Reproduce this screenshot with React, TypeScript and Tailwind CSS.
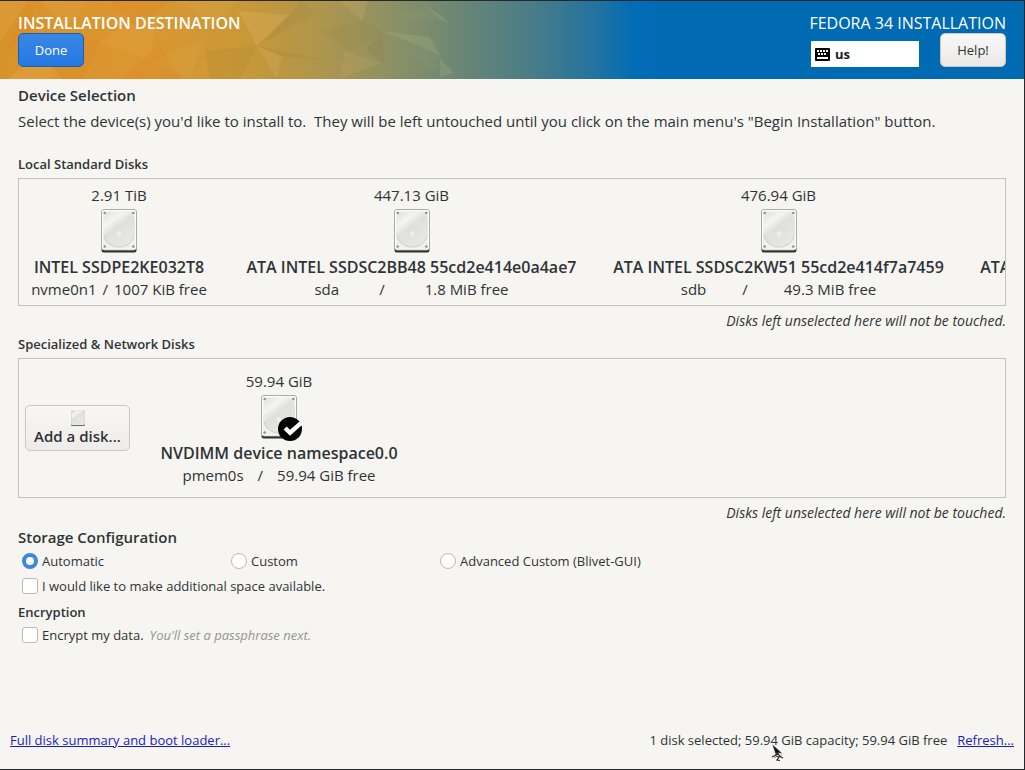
import React, { useId, useState } from "react";

type Disk = {
  size: string;
  name: string;
  device: string;
  free: string;
  width: string;
  gap: string;
};

const LOCAL_DISKS: Disk[] = [
  { size: "2.91 TiB", name: "INTEL SSDPE2KE032T8", device: "nvme0n1", free: "1007 KiB free", width: "w-44", gap: "gap-1.5" },
  { size: "447.13 GiB", name: "ATA INTEL SSDSC2BB48 55cd2e414e0a4ae7", device: "sda", free: "1.8 MiB free", width: "w-[325px]", gap: "gap-10" },
  { size: "476.94 GiB", name: "ATA INTEL SSDSC2KW51 55cd2e414f7a7459", device: "sdb", free: "49.3 MiB free", width: "w-[325px]", gap: "gap-9" },
  { size: "476.94 GiB", name: "ATA INTEL SSDSC2KW51 55cd2e414f7a7460", device: "sdc", free: "49.3 MiB free", width: "w-[325px]", gap: "gap-9" },
];

const NETWORK_DISK: Disk = {
  size: "59.94 GiB",
  name: "NVDIMM device namespace0.0",
  device: "pmem0s",
  free: "59.94 GiB free",
  width: "w-[226px]",
  gap: "gap-3.5",
};

function DiskIcon({ className }: { className: string }) {
  const id = useId();
  return (
    <svg viewBox="0 0 36 44" className={className} aria-hidden="true" preserveAspectRatio="none">
      <defs>
        <linearGradient id={`${id}p`} x1="0" y1="0" x2="0.7" y2="1">
          <stop offset="0" stopColor="#dededb" />
          <stop offset="0.3" stopColor="#f4f4f2" />
          <stop offset="0.5" stopColor="#dfdfdb" />
          <stop offset="1" stopColor="#e8e8e5" />
        </linearGradient>
      </defs>
      <rect x="0.5" y="4" width="35" height="39.5" rx="2.5" fill="#2c3032" />
      <rect x="0.5" y="0.5" width="35" height="40.5" rx="2.5" fill="#f0f0ee" stroke="#a9aba8" />
      <rect x="1.5" y="1.5" width="33" height="38.5" rx="1.5" fill="none" stroke="#fcfcfc" />
      <path d="M5.500 3h25l3.500 8v14c-1 8-8 13-16 13S3 33 2 25V11z" fill={`url(#${id}p)`} />
      <path d="M3 27c2 7 8 11 15 11s13-4 15-11" fill="none" stroke="#c6c6c2" strokeWidth="0.8" />
      <circle cx="18" cy="24.500" r="1.800" fill="#ececea" stroke="#f8f8f6" strokeWidth="0.6" />
      <g fill="#8b8d8a">
        <circle cx="3.700" cy="4" r="1.200" />
        <circle cx="32.300" cy="4" r="1.200" />
        <circle cx="3.700" cy="37.500" r="1.200" />
        <circle cx="32.300" cy="37.500" r="1.200" />
      </g>
    </svg>
  );
}

function CheckBadge() {
  return (
    <svg viewBox="0 0 24 24" className="absolute left-[17px] top-[22px] h-6 w-6" aria-hidden="true">
      <circle cx="12" cy="12" r="12" fill="#000" />
      <path d="M5.500 12.500 8.800 9.500l3.200 3.300L21.500 4.500 24.500 7.500 12 18.800z" fill="#fff" />
    </svg>
  );
}

function DiskTile({ disk, selected = false }: { disk: Disk; selected?: boolean }) {
  return (
    <button
      type="button"
      aria-pressed={selected}
      className={`flex shrink-0 flex-col items-center whitespace-nowrap text-[15px] leading-[22px] ${disk.width}`}
    >
      <span>{disk.size}</span>
      <span className="relative my-[3px] h-11 w-9">
        <DiskIcon className="h-11 w-9" />
        {selected && <CheckBadge />}
      </span>
      <span className="text-base leading-[22px] font-semibold">{disk.name}</span>
      <span className={`flex ${disk.gap}`}>
        <span>{disk.device}</span>
        <span>/</span>
        <span>{disk.free}</span>
      </span>
    </button>
  );
}

function Backdrop() {
  return (
    <svg
      className="absolute inset-y-0 left-0 h-full w-[660px]"
      viewBox="0 0 660 78"
      preserveAspectRatio="none"
      aria-hidden="true"
    >
      <defs>
        <linearGradient id="sky" x1="0" x2="1" y1="0" y2="0">
          <stop offset="0" stopColor="#d8922c" />
          <stop offset="0.2" stopColor="#dc9630" />
          <stop offset="0.36" stopColor="#cb9836" />
          <stop offset="0.5" stopColor="#ab9550" />
          <stop offset="0.6" stopColor="#8a9066" />
          <stop offset="0.7" stopColor="#698675" />
          <stop offset="0.8" stopColor="#4b7d86" />
          <stop offset="0.9" stopColor="#24739f" />
          <stop offset="0.96" stopColor="#026cb7" />
          <stop offset="1" stopColor="#006bb3" />
        </linearGradient>
      </defs>
      <rect width="660" height="78" fill="url(#sky)" />
      <g fill="#f5c978">
        <path d="M238 10 289 14 257 45z" opacity=".2" />
        <path d="M257 45 282 55 277 78z" opacity=".14" />
        <path d="M40 0 90 0 66 26z" opacity=".1" />
        <path d="M8 78 40 48 62 78z" opacity=".14" />
        <path d="M100 40 160 8 150 60z" opacity=".08" />
        <path d="M150 62 205 36 190 78z" opacity=".08" />
        <path d="M0 0 28 0 0 40z" opacity=".12" />
        <path d="M340 0 368 0 362 20z" opacity=".14" />
        <path d="M394 14 450 22 432 8z" opacity=".06" />
        <path d="M180 0 236 0 212 24z" opacity=".1" />
        <path d="M340 78 345 50 382 62z" opacity=".1" />
      </g>
      <g fill="#8c7a3c">
        <path d="M257 45 316 12 300 0 289 14z" opacity=".14" />
        <path d="M257 45 330 60 282 55z" opacity=".14" />
        <path d="M320 30 362 20 384 30 350 50z" opacity=".1" />
        <path d="M205 50 257 45 240 78 210 78z" opacity=".12" />
        <path d="M366 48 385 64 382 30z" opacity=".2" />
      </g>
      <g fill="#e07a10">
        <path d="M60 30 100 40 84 78 50 78z" opacity=".12" />
        <path d="M110 0 170 0 140 30z" opacity=".18" />
        <path d="M28 0 40 30 6 50z" opacity=".16" />
        <path d="M160 44 182 78 120 78z" opacity=".14" />
      </g>
      <g fill="#a9b78b">
        <path d="M382 30 430 36 440 54z" opacity=".26" />
        <path d="M440 58 454 72 440 76z" opacity=".24" />
        <path d="M405 44 440 54 434 72z" opacity=".08" />
        <path d="M420 0 450 22 440 18z" opacity=".22" />
      </g>
    </svg>
  );
}

function KeyboardIcon() {
  return (
    <svg viewBox="0 0 15 13" className="h-[13px] w-[15px]" aria-hidden="true">
      <rect width="15" height="13" rx="1" fill="#000" />
      <g fill="#fff">
        <path d="M2 2h2v2H2zM5 2h2v2H5zM8 2h2v2H8zM11 2h2v2h-2zM3 5h2v2H3zM6 5h2v2H6zM9 5h2v2H9zM2 9h11v2H2z" />
      </g>
    </svg>
  );
}

function Pointer() {
  return (
    <svg viewBox="0 0 14 18" className="pointer-events-none absolute right-[229px] top-3.5 h-[18px] w-3.5" aria-hidden="true">
      <path d="M1 0 11.500 9.500 7 9 4.500 10z" fill="#111" stroke="#fff" strokeWidth="0.4" />
      <path d="M7 9 4 11.500 1 13M7 9.500l2 3 3 1.500M5 12l3 1-2 3 3 .5" fill="none" stroke="#222" strokeWidth="1.200" />
      <path d="M2 12.500 5 13.500M8 12l2.500-1" fill="none" stroke="#666" strokeWidth="0.8" />
    </svg>
  );
}

const control = "m-0 size-4 shrink-0 appearance-none border border-[#bdbbb7] bg-white";

function Radio({ label, value, checked, onPick }: { label: string; value: string; checked: boolean; onPick: (v: string) => void }) {
  return (
    <label className="flex items-center gap-1">
      <input
        type="radio"
        name="storage"
        value={value}
        checked={checked}
        onChange={() => onPick(value)}
        className={`${control} rounded-full checked:border-4 checked:border-[#3f86dd]`}
      />
      {label}
    </label>
  );
}

export default function App() {
  const [mode, setMode] = useState("automatic");
  return (
    <div className="flex min-h-screen flex-col border-t border-r border-b border-[#26292b] bg-[#f6f5f2] font-['Open_Sans','Noto_Sans',sans-serif] text-[13px] leading-5 text-[#2e3436]">
      <header className="relative flex items-start justify-between bg-[#006bb3] px-[18px] py-3 text-white">
        <Backdrop />
        <div className="relative">
          <h1 className="text-base leading-5 font-semibold">INSTALLATION DESTINATION</h1>
          <button
            type="button"
            className="h-[34px] w-[66px] rounded-[5px] border border-[#1b5fb4] bg-linear-to-b from-[#3987e5] to-[#2379e2]"
          >
            Done
          </button>
        </div>
        <div className="relative">
          <p className="text-base leading-5">FEDORA 34 INSTALLATION</p>
          <div className="flex items-end justify-end gap-[21px]">
            <button type="button" className="flex h-[26px] w-[108px] items-center gap-[5px] bg-white px-1 font-bold text-[#1a1c1d]">
              <KeyboardIcon />
              us
            </button>
            <button
              type="button"
              className="h-[34px] w-[66px] rounded-[5px] border border-[#cdc7c2] bg-linear-to-b from-[#f9f8f7] to-[#ebe9e7] text-[#2e3436]"
            >
              Help!
            </button>
          </div>
        </div>
      </header>

      <main className="flex flex-1 flex-col px-[18px] pt-1.5">
        <h2 className="text-[15px] leading-5 font-semibold">Device Selection</h2>
        <p className="mt-1.5 text-[15px] leading-5">
          Select the device(s) you'd like to install to.&nbsp; They will be left untouched until you click on the main
          menu's "Begin Installation" button.
        </p>

        <h3 className="mt-[23px] font-semibold">Local Standard Disks</h3>
        <div className="mt-1 flex gap-[42px] overflow-hidden border border-[#c4c2be] px-3 py-[5px]">
          {LOCAL_DISKS.map((disk) => (
            <DiskTile key={disk.device} disk={disk} />
          ))}
        </div>
        <p className="mt-[5px] text-right text-sm leading-5 italic">Disks left unselected here will not be touched.</p>

        <h3 className="mt-[3px] font-semibold">Specialized &amp; Network Disks</h3>
        <div className="mt-1 flex items-center gap-9 border border-[#c4c2be] px-1.5 py-[11px]">
          <button
            type="button"
            className="flex h-[46px] w-[105px] flex-col items-center justify-center rounded-[5px] border border-[#cdc7c2] bg-linear-to-b from-[#f8f7f6] to-[#eeecea] text-[15px] leading-5 font-semibold"
          >
            <DiskIcon className="h-4 w-3.5" />
            Add a disk...
          </button>
          <DiskTile disk={NETWORK_DISK} selected />
        </div>
        <p className="mt-[5px] text-right text-sm leading-5 italic">Disks left unselected here will not be touched.</p>

        <h2 className="mt-1 text-[15px] leading-5 font-semibold">Storage Configuration</h2>
        <div className="mt-1 ml-1 grid grid-cols-[209px_209px_1fr]">
          <Radio label="Automatic" value="automatic" checked={mode === "automatic"} onPick={setMode} />
          <Radio label="Custom" value="custom" checked={mode === "custom"} onPick={setMode} />
          <Radio label="Advanced Custom (Blivet-GUI)" value="blivet" checked={mode === "blivet"} onPick={setMode} />
        </div>
        <label className="mt-[5px] ml-1 flex items-center gap-1 self-start">
          <input type="checkbox" className={`${control} rounded-[3px] checked:bg-[#3f86dd]`} />
          I would like to make additional space available.
        </label>

        <h3 className="mt-1.5 font-semibold">Encryption</h3>
        <div className="mt-[3px] ml-1 flex gap-1.5">
          <label className="flex items-center gap-1">
            <input type="checkbox" className={`${control} rounded-[3px] checked:bg-[#3f86dd]`} />
            Encrypt my data.
          </label>
          <span className="text-[#93958f] italic">You'll set a passphrase next.</span>
        </div>
      </main>

      <footer className="flex justify-between px-2.5 pb-[19px]">
        <a href="#summary" className="text-[#1b1bc8] underline">
          Full disk summary and boot loader...
        </a>
        <div className="relative flex gap-2.5">
          <span>1 disk selected; 59.94 GiB capacity; 59.94 GiB free</span>
          <a href="#refresh" className="text-[#1b1bc8] underline">
            Refresh...
          </a>
          <Pointer />
        </div>
      </footer>
    </div>
  );
}
